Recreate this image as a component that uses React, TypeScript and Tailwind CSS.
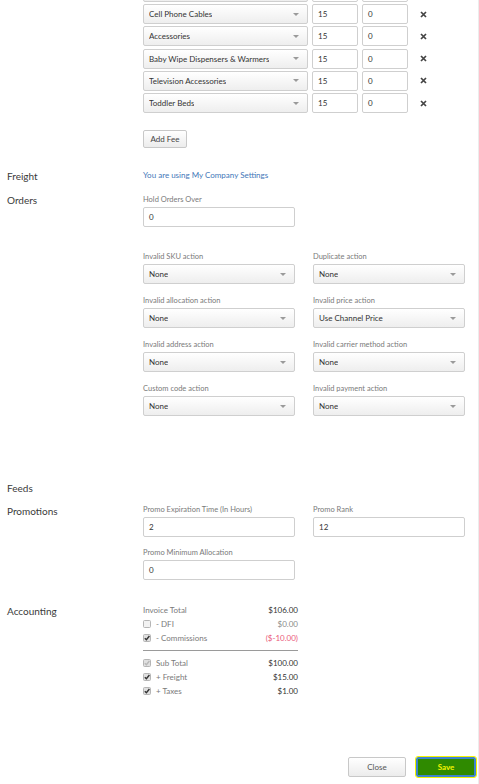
import React from 'react';

const fees = [
  '',
  'Cell Phone Cables',
  'Accessories',
  'Baby Wipe Dispensers & Warmers',
  'Television Accessories',
  'Toddler Beds',
];

const Caret = () => (
  <svg width="6" height="3" viewBox="0 0 6 3" className="shrink-0">
    <path d="M0 0h6L3 3z" fill="#9a9a9a" />
  </svg>
);

const Select: React.FC<{ value: string; className?: string }> = ({ value, className = '' }) => (
  <div
    className={`flex h-[20px] items-center justify-between rounded-[2px] border border-[#cfcfcf] bg-gradient-to-b from-white to-[#eeeeee] pl-[5px] pr-[8px] text-[8px] text-[#333] ${className}`}
  >
    <span className="truncate">{value}</span>
    <Caret />
  </div>
);

const Input: React.FC<{ value: string; className?: string }> = ({ value, className = '' }) => (
  <div
    className={`flex h-[20px] items-center rounded-[2px] border border-[#cfcfcf] bg-white px-[5px] text-[8px] text-[#333] ${className}`}
  >
    {value}
  </div>
);

const FieldLabel: React.FC<{ children: React.ReactNode }> = ({ children }) => (
  <div className="h-[12px] text-[7.5px] leading-[12px] text-[#7a7a7a]">{children}</div>
);

const Field: React.FC<{ label: string; children: React.ReactNode }> = ({ label, children }) => (
  <div className="flex flex-col gap-[1px]">
    <FieldLabel>{label}</FieldLabel>
    {children}
  </div>
);

const SectionLabel: React.FC<{ children: React.ReactNode }> = ({ children }) => (
  <div className="w-[143px] shrink-0 pl-[7px] text-[10px] leading-[12px] text-[#3a3a3a]">{children}</div>
);

const Check: React.FC<{ checked?: boolean; disabled?: boolean }> = ({ checked, disabled }) => (
  <svg width="8" height="8" viewBox="0 0 8 8" className="shrink-0">
    <rect x="0.5" y="0.5" width="7" height="7" rx="1" fill={checked ? '#e0e0e0' : '#f2f2f2'} stroke="#b5b5b5" />
    {checked && (
      <path
        d="M1.8 4.2l1.6 1.6L6.4 2"
        fill="none"
        stroke={disabled ? '#b8b8b8' : '#333'}
        strokeWidth="1.4"
      />
    )}
  </svg>
);

const LedgerRow: React.FC<{
  label: string;
  amount: string;
  box?: 'on' | 'off' | 'disabled';
  tone?: 'dark' | 'muted' | 'red';
}> = ({ label, amount, box, tone = 'dark' }) => {
  const amountColor = tone === 'red' ? 'text-[#ea5a7a]' : tone === 'muted' ? 'text-[#8a8a8a]' : 'text-[#333]';
  return (
    <div className="flex h-[14px] items-center justify-between text-[8px]">
      <div className="flex items-center gap-[5px] text-[#7a7a7a]">
        {box && <Check checked={box !== 'off'} disabled={box === 'disabled'} />}
        <span>{label}</span>
      </div>
      <span className={amountColor}>{amount}</span>
    </div>
  );
};

export default function App() {
  return (
    <div
      className="relative h-[784px] w-[479px] overflow-hidden border-r border-[#ececec] bg-white"
      style={{ fontFamily: 'Lato, "Open Sans", sans-serif' }}
    >
      {/* category fee rows, the first one scrolled mostly out of view */}
      <div className="ml-[143px] mt-[-18.3px] flex flex-col gap-[2.3px]">
        {fees.map((f, i) => (
          <div key={i} className="flex items-center">
            <Select value={f} className="w-[165px]" />
            <Input value={i === 0 ? '' : '15'} className="ml-[4px] w-[46px]" />
            <Input value={i === 0 ? '' : '0'} className="ml-[4px] w-[46px]" />
            <svg width="7" height="7" viewBox="0 0 7 7" className="ml-[12px]">
              <path d="M1 1l5 5M6 1L1 6" stroke="#444" strokeWidth="1.7" />
            </svg>
          </div>
        ))}
      </div>
      <div className="ml-[143px] mt-[17px] flex">
        <button className="h-[18px] w-[44px] rounded-[2px] border border-[#c8c8c8] bg-gradient-to-b from-white to-[#ececec] text-[8px] text-[#444]">
          Add Fee
        </button>
      </div>

      {/* freight */}
      <div className="mt-[22px] flex">
        <SectionLabel>Freight</SectionLabel>
        <div className="mt-[-1px] text-[8px] leading-[12px] text-[#3f77b8]">You are using My Company Settings</div>
      </div>

      {/* orders */}
      <div className="mt-[12px] flex">
        <SectionLabel>Orders</SectionLabel>
        <div className="flex flex-col">
          <Field label="Hold Orders Over">
            <Input value="0" className="w-[152px]" />
          </Field>
          <div className="mt-[24px] grid grid-cols-[152px_152px] gap-x-[18px] gap-y-[11px]">
            <Field label="Invalid SKU action">
              <Select value="None" />
            </Field>
            <Field label="Duplicate action">
              <Select value="None" />
            </Field>
            <Field label="Invalid allocation action">
              <Select value="None" />
            </Field>
            <Field label="Invalid price action">
              <Select value="Use Channel Price" />
            </Field>
            <Field label="Invalid address action">
              <Select value="None" />
            </Field>
            <Field label="Invalid carrier method action">
              <Select value="None" />
            </Field>
            <Field label="Custom code action">
              <Select value="None" />
            </Field>
            <Field label="Invalid payment action">
              <Select value="None" />
            </Field>
          </div>
        </div>
      </div>

      {/* feeds */}
      <div className="mt-[66px] flex">
        <SectionLabel>Feeds</SectionLabel>
      </div>

      {/* promotions */}
      <div className="mt-[10.5px] flex">
        <SectionLabel>Promotions</SectionLabel>
        <div className="mt-[-1px] grid grid-cols-[152px_152px] gap-x-[18px] gap-y-[10.5px]">
          <Field label="Promo Expiration Time (In Hours)">
            <Input value="2" />
          </Field>
          <Field label="Promo Rank">
            <Input value="12" />
          </Field>
          <Field label="Promo Minimum Allocation">
            <Input value="0" />
          </Field>
        </div>
      </div>

      {/* accounting */}
      <div className="mt-[25px] flex">
        <SectionLabel>Accounting</SectionLabel>
        <div className="mt-[-2px] w-[155px]">
          <LedgerRow label="Invoice Total" amount="$106.00" />
          <LedgerRow label="- DFI" amount="$0.00" box="off" tone="muted" />
          <LedgerRow label="- Commissions" amount="($-10.00)" box="on" tone="red" />
          <div className="mb-[5px] mt-[4.5px] h-[1px] bg-[#9a9a9a]" />
          <LedgerRow label="Sub Total" amount="$100.00" box="disabled" />
          <LedgerRow label="+ Freight" amount="$15.00" box="on" />
          <LedgerRow label="+ Taxes" amount="$1.00" box="on" />
        </div>
      </div>

      {/* footer actions */}
      <div className="mr-[2px] mt-[59px] flex justify-end gap-[10px]">
        <button className="h-[20px] w-[58px] rounded-[2px] border border-[#c8c8c8] bg-gradient-to-b from-white to-[#ececec] text-[8px] text-[#555]">
          Close
        </button>
        <button className="h-[20px] w-[60px] rounded-[2px] border-2 border-[#3d84cf] bg-[#2f8a00] text-[8px] font-bold text-[#f2f500] outline outline-1 outline-[#f5f500]">
          Save
        </button>
      </div>
    </div>
  );
}
